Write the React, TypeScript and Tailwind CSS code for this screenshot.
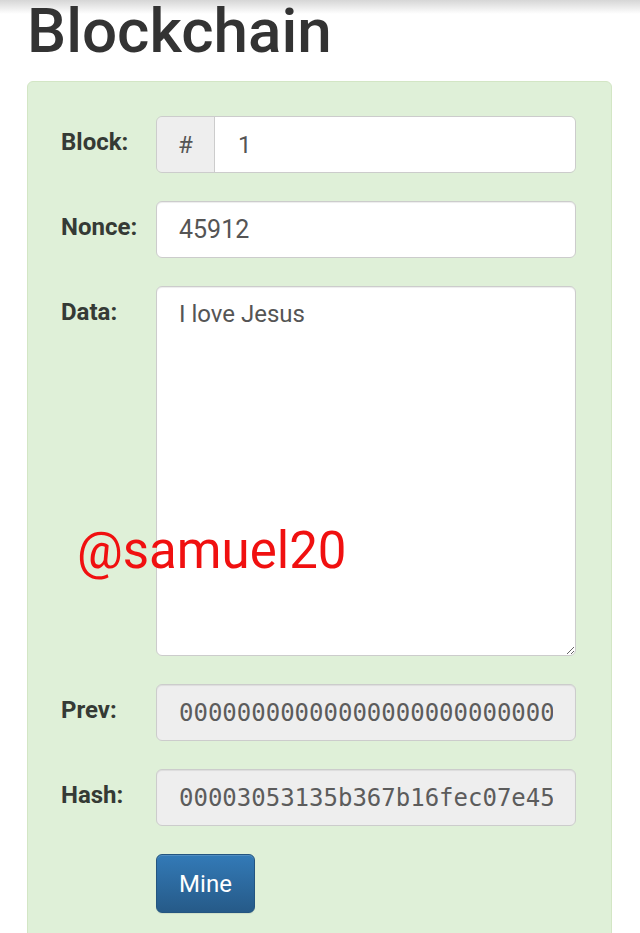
import React from "react";

const mono = "font-['DejaVu_Sans_Mono','Liberation_Mono',monospace]";

function Label({ children }: { children: React.ReactNode }) {
  return (
    <div className="pt-[12px] text-[24px] leading-[28px] font-bold text-[#353a35]">
      {children}
    </div>
  );
}

export default function App() {
  return (
    <div className="relative min-h-screen overflow-hidden bg-[linear-gradient(#d6d6d6,#ffffff_14px)] pt-[2px] font-['Roboto','Noto_Sans',sans-serif]">
      <h1 className="pl-[27px] text-[62px] leading-[58px] font-medium text-[#333333]">
        Blockchain
      </h1>
      <div className="ml-[27px] mt-[21px] w-[585px] rounded-t-[6px] border border-[#d3e6c5] bg-[#dff0d8] pl-[33px] pt-[34px] pb-[36px]">
        <div className="grid grid-cols-[95px_420px] gap-y-[28px]">
          <Label>Block:</Label>
          <div className="flex h-[57px] overflow-hidden rounded-[6px] border border-[#cccccc] shadow-[inset_0_1px_1px_rgba(0,0,0,0.075)]">
            <div className="flex w-[58px] items-center justify-center border-r border-[#cccccc] bg-[#eeeeee] text-[24px] text-[#555555]">
              #
            </div>
            <input
              readOnly
              value="1"
              className="h-full min-w-0 flex-1 bg-white px-[23px] text-[24px] text-[#555555] outline-none"
            />
          </div>

          <Label>Nonce:</Label>
          <input
            readOnly
            value="45912"
            className="h-[57px] rounded-[6px] border border-[#cccccc] bg-white px-[22px] text-[25px] text-[#555555] shadow-[inset_0_1px_1px_rgba(0,0,0,0.075)] outline-none"
          />

          <Label>Data:</Label>
          <textarea
            readOnly
            value="I love Jesus"
            className="h-[370px] resize-y rounded-[6px] border border-[#cccccc] bg-white px-[22px] py-[12px] text-[24px] leading-[30px] text-[#555555] shadow-[inset_0_1px_1px_rgba(0,0,0,0.075)] outline-none"
          />

          <Label>Prev:</Label>
          <input
            readOnly
            value="0000000000000000000000000000000000000000000000000000000000000000"
            className={`h-[57px] rounded-[6px] border border-[#cccccc] bg-[#eeeeee] px-[22px] text-[24px] text-[#5c5c5c] shadow-[inset_0_1px_1px_rgba(0,0,0,0.075)] outline-none ${mono}`}
          />

          <Label>Hash:</Label>
          <input
            readOnly
            value="00003053135b367b16fec07e45f6a1e4b5a2d3c9e8f7a6b5c4d3e2f1a0b9c8d7"
            className={`h-[57px] rounded-[6px] border border-[#cccccc] bg-[#eeeeee] px-[22px] text-[24px] text-[#5c5c5c] shadow-[inset_0_1px_1px_rgba(0,0,0,0.075)] outline-none ${mono}`}
          />

          <div />
          <div>
            <button className="h-[59px] w-[99px] rounded-[6px] border border-[#245580] bg-[linear-gradient(#337ab7,#265a88)] text-[24px] text-white shadow-[inset_0_1px_0_rgba(255,255,255,0.15),0_1px_1px_rgba(0,0,0,0.075)]">
              Mine
            </button>
          </div>
        </div>
      </div>
      <div className="pointer-events-none absolute left-[77px] top-[521px] text-[51px] leading-[60px] text-[#f01010]">
        @samuel20
      </div>
    </div>
  );
}
